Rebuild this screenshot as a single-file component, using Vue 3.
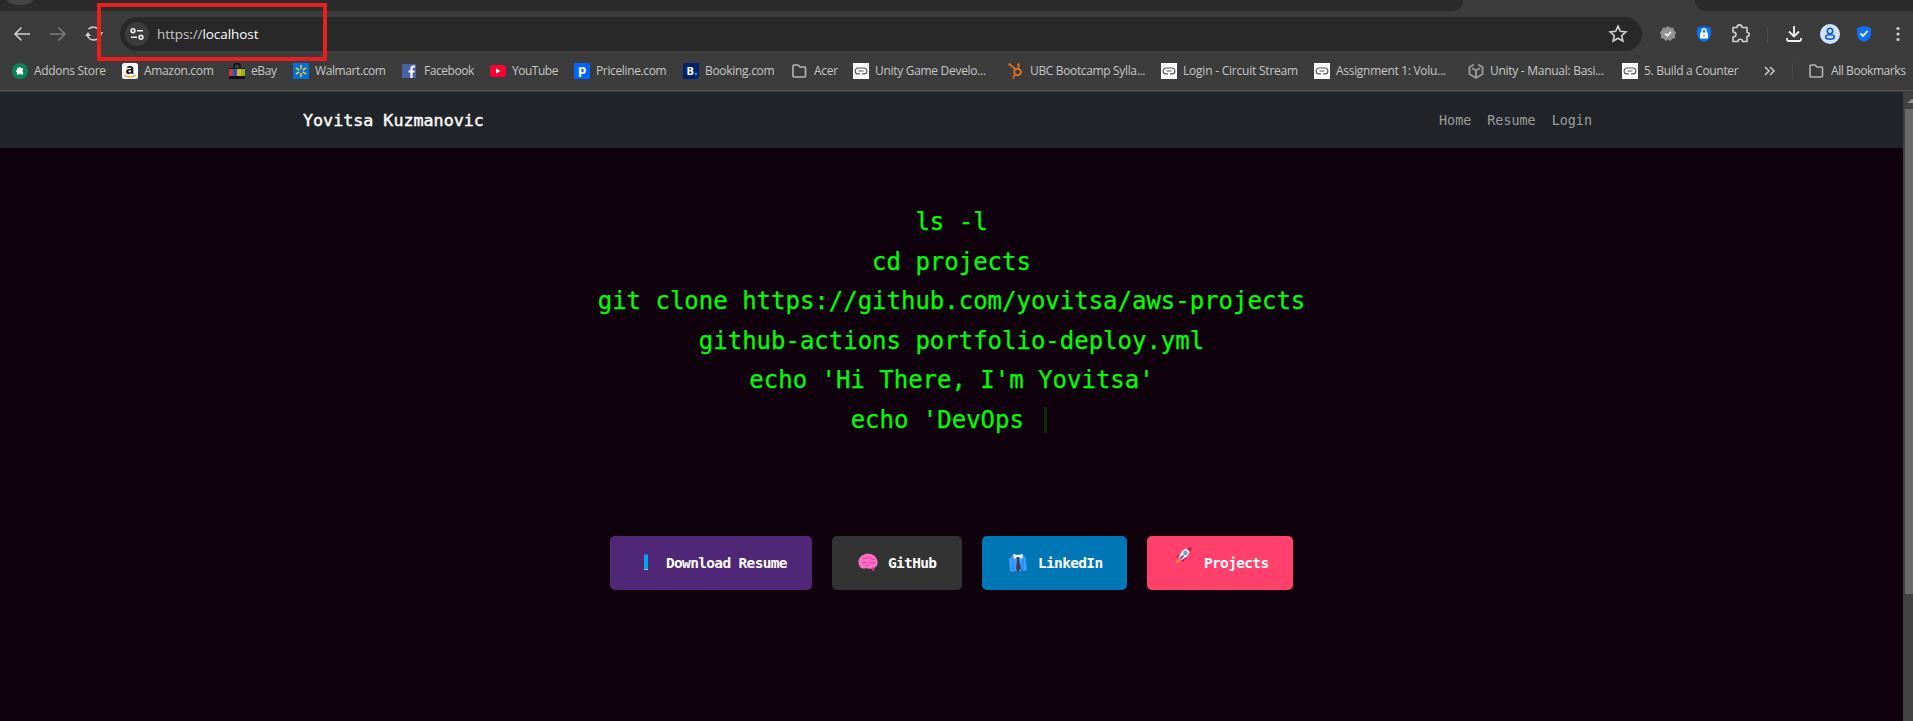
<script setup>
const bookmarks = [
  { icon: 'addons', label: 'Addons Store', ls: -0.3 },
  { icon: 'amazon', label: 'Amazon.com', ls: -0.34 },
  { icon: 'ebay', label: 'eBay', ls: -0.4 },
  { icon: 'walmart', label: 'Walmart.com', ls: -0.4 },
  { icon: 'facebook', label: 'Facebook', ls: -0.45 },
  { icon: 'youtube', label: 'YouTube', ls: -0.48 },
  { icon: 'priceline', label: 'Priceline.com', ls: -0.36 },
  { icon: 'booking', label: 'Booking.com', ls: -0.3 },
  { icon: 'folder', label: 'Acer', ls: -0.3 },
  { icon: 'link', label: 'Unity Game Develo...', ls: -0.3 },
  { icon: 'hubspot', label: 'UBC Bootcamp Sylla...', ls: -0.35 },
  { icon: 'link', label: 'Login - Circuit Stream', ls: -0.22 },
  { icon: 'link', label: 'Assignment 1: Volu...', ls: -0.3 },
  { icon: 'unity', label: 'Unity - Manual: Basi...', ls: -0.28 },
  { icon: 'link', label: '5. Build a Counter', ls: -0.31 },
]
const lines = [
  'ls -l',
  'cd projects',
  'git clone https://github.com/yovitsa/aws-projects',
  'github-actions portfolio-deploy.yml',
  "echo 'Hi There, I'm Yovitsa'",
]
</script>

<template>
  <div class="window">
    <div class="tabs"><span class="tab-search"></span><span class="active-tab"></span><span class="tab-rest"></span></div>
    <div class="toolbar">
      <svg class="tools-left" width="120" height="35" viewBox="0 0 120 35" fill="none" stroke="#d0d0d0" stroke-width="1.6">
        <path d="M30 17H15M21.500 10.500l-6.500 6.500 6.500 6.500" />
        <path d="M50 17h15M58.500 10.500l6.500 6.500-6.500 6.500" stroke="#7c7c7c" />
        <path d="M88.500 12a7 7 0 0 1 11 2M99.500 20a7 7 0 0 1-12-1" />
        <path d="M85 19l3-4 3 4zM98 15h5l-2 4z" fill="#d0d0d0" stroke="none" />
      </svg>
      <div class="omnibox">
        <span class="site-info">
          <svg width="16" height="16" viewBox="0 0 16 16" fill="none" stroke="#eee" stroke-width="1.6">
            <circle cx="4" cy="4.700" r="1.9" /><path d="M8 4.700h6M2 11.300h6" /><circle cx="12" cy="11.300" r="1.9" />
          </svg>
        </span>
        <span class="url">https://<b>localhost</b></span>
        <svg class="star" width="20" height="20" viewBox="0 0 20 20" fill="none" stroke="#d0d0d0" stroke-width="1.6">
          <path d="M10 2.2l2.3 5.1 5.6.6-4.2 3.8 1.2 5.5-4.9-2.9-4.9 2.9 1.2-5.5-4.2-3.8 5.6-.6z" />
        </svg>
      </div>
      <svg class="tools-right" width="271" height="35" viewBox="0 0 271 35" fill="none">
        <path d="M26 9l2.300 1.800 3-.3.800 2.900 2.100 2-1.300 2.600.3 3-2.900.8-2 2.100-2.300-1.300-2.300 1.300-2-2.100-2.900-.8.300-3-1.300-2.600 2.100-2 .8-2.900 3 .3z" fill="#929292" />
        <path d="M23 16.500l2.300 2.200 3.700-4" stroke="#fff" stroke-width="1.4" />
        <path d="M62 9l7 2v6q0 5-7 8-7-3-7-8v-6z" fill="#0b72f5" />
        <path d="M60 16v-2a2 2 0 0 1 4 0v2" stroke="#fff" stroke-width="1.5" /><rect x="58" y="15.500" width="8" height="6" rx="1" fill="#fff" /><path d="M62 17.500v2" stroke="#0b72f5" />
        <path d="M91 11h4c0-3.500 5-3.500 5 0h5v5c3 0 3 4 0 4v5h-4.500c0-3-4.500-3-4.500 0h-5v-4.500c4 0 4-5 0-5z" transform="translate(0 -.5)" stroke="#d0d0d0" stroke-width="1.6" stroke-linejoin="round" />
        <path d="M125.500 9v16" stroke="#484848" />
        <path d="M152 9v10M147 14.500l5 5 5-5M145 21v1.500q0 1.500 1.500 1.500h11q1.500 0 1.500-1.500V21" stroke="#f1f1f1" stroke-width="1.800" />
        <circle cx="188" cy="17" r="10" fill="#d3e3fd" /><circle cx="188" cy="14" r="2.700" stroke="#0b57d0" stroke-width="1.600" /><ellipse cx="188" cy="20" rx="4.300" ry="2.200" stroke="#0b57d0" stroke-width="1.600" />
        <path d="M222 9l7 2v6q0 5-7 8-7-3-7-8v-6z" fill="#0b72f5" /><path d="M218.500 16.500l2.500 2.500 4.500-5" stroke="#fff" stroke-width="1.8" />
        <g fill="#d0d0d0"><circle cx="256" cy="11.500" r="1.600" /><circle cx="256" cy="17" r="1.600" /><circle cx="256" cy="22.500" r="1.600" /></g>
      </svg>
    </div>
    <div class="bookmarks">
      <div v-for="b in bookmarks" :key="b.label" class="bookmark">
        <svg width="16" height="16" viewBox="0 0 16 16">
          <g v-if="b.icon === 'addons'"><circle cx="8" cy="8" r="8" fill="#0b8457" /><path d="M5 5h1.500q1-2 2.500 0h2v2q-1.500 1 0 2v2.500H9q-1-1.500-2 0H5V9.500q-2-1 0-2.500z" fill="#fff" /></g>
          <g v-else-if="b.icon === 'amazon'"><rect width="16" height="16" rx="2.500" fill="#fff" /><text x="8" y="10.500" text-anchor="middle" class="mark" font-size="14.5" fill="#111">a</text><path d="M2 12q6 4 12 0" stroke="#f7981d" stroke-width="1.300" fill="none" /></g>
          <g v-else-if="b.icon === 'ebay'"><path d="M5 5V3q0-2.500 3-2.500T11 3v2" stroke="#111" stroke-width="1.500" fill="none" /><path d="M0 5h16v11H0z" fill="#111" /><path d="M0 6h4v7H0z" fill="#e53238" /><path d="M4 6h4v7H4z" fill="#0064d2" /><path d="M8 6h4v7H8z" fill="#f5af02" /><path d="M12 6h4v7h-4z" fill="#86b817" /></g>
          <g v-else-if="b.icon === 'walmart'"><path d="M0 0h16v16H0z" fill="#0071dc" /><path d="M8 2v4M8 10v4M2.800 5l3.500 2M9.700 9l3.500 2M13.200 5L9.700 7M6.300 9l-3.500 2" stroke="#ffc220" stroke-width="1.500" /></g>
          <g v-else-if="b.icon === 'facebook'"><path d="M0 1h14v14H0z" fill="#4862a5" /><path d="M9.500 15V5.500q0-2 2-2H13M6.500 8.500h6" stroke="#fff" stroke-width="2.200" fill="none" /></g>
          <g v-else-if="b.icon === 'youtube'"><rect y="2" width="16" height="12" rx="3" fill="#f03" /><path d="M6 5.500l4.500 2.500L6 10.500z" fill="#fff" /></g>
          <g v-else-if="b.icon === 'priceline'"><rect width="16" height="16" rx="1" fill="#06f" /><text x="8" y="11" text-anchor="middle" class="mark" font-size="13" fill="#fff">p</text></g>
          <g v-else-if="b.icon === 'booking'"><path d="M0 3q0-3 3-3h13v13q0 3-3 3H0z" fill="#00216b" /><text x="3.500" y="12" class="mark" font-size="11" fill="#fff">B</text><circle cx="12.800" cy="11" r="1.200" fill="#00a8ff" /></g>
          <path v-else-if="b.icon === 'folder'" d="M1 3q0-1 1-1h4l2 2h4.500q1 0 1 1v8q0 1-1 1H2q-1 0-1-1z" fill="none" stroke="#b5b5b5" stroke-width="1.600" />
          <g v-else-if="b.icon === 'link'"><path d="M0 0h16v16H0z" fill="#fff" /><path d="M7 10.800H5a2.900 2.900 0 0 1 0-5.800h6a2.900 2.900 0 0 1 0 5.800H9M5.500 8h5" fill="none" stroke="#555" stroke-width="1.200" /></g>
          <g v-else-if="b.icon === 'hubspot'" fill="none" stroke="#d9721d"><circle cx="9.500" cy="9" r="3.300" stroke-width="2" /><path d="M2 1.500l5.500 5M10.500 5V1M7 11.500L5 14.500" stroke-width="1.700" /><path d="M.500 1.500h2.500M9.500 1.500h2M5 15h1" stroke-width="2.600" /></g>
          <g v-else fill="none" stroke="#969696" stroke-width="2"><path d="M6 1.500L1.500 4v7L8 15l6.500-4V4L10 1.500M4 5l4 2.500L12 5M8 7.500V15" /></g>
        </svg>
        <span :style="{ letterSpacing: b.ls + 'px' }">{{ b.label }}</span>
      </div>
      <svg width="32" height="16" viewBox="0 0 32 16" fill="none"><path d="M1 4l4 4-4 4M6 4l4 4-4 4" stroke="#c7c7c7" stroke-width="1.600" /><path d="M28.500 0v16" stroke="#484848" /></svg>
      <div class="bookmark all">
        <svg width="16" height="16" viewBox="0 0 16 16"><path d="M1 3q0-1 1-1h4l2 2h4.500q1 0 1 1v8q0 1-1 1H2q-1 0-1-1z" fill="none" stroke="#b5b5b5" stroke-width="1.600" /></svg>
        <span>All Bookmarks</span>
      </div>
    </div>
    <div class="viewport">
      <div class="page">
        <nav class="nav">
          <span class="brand">Yovitsa Kuzmanovic</span>
          <div class="links"><a>Home</a><a>Resume</a><a>Login</a></div>
        </nav>
        <div class="terminal">
          <div v-for="l in lines" :key="l">{{ l }}</div>
          <div class="typing">echo 'DevOps <i class="cursor"></i></div>
        </div>
        <div class="actions">
          <a class="btn resume"><svg width="22" height="20" viewBox="0 0 22 20"><path d="M8 1.500h4v15H8z" fill="#00a6ed" /><path d="M8 16.500h4" stroke="#9fc7dd" /></svg><span>Download Resume</span></a>
          <a class="btn github"><svg width="20" height="20" viewBox="0 0 20 20"><path d="M.5 10C0 6 3 2 7.500 1c6-1.500 11 2 12 7 .5 4-1 6-3 6.500l-.5 4-3-3c-2 1-4-1-6 0-4 .5-6-2-6.500-5.500z" fill="#ff6fc4" /><path d="M5 5l3 1 2-2M12 5l3 2 2-1M4 10l3-1 2 1M11 10l3-1 3 1M8 13l3-1" fill="none" stroke="#f0349f" stroke-width="1" /><path d="M13.500 15l2.500 3.500v-4z" fill="#e21c75" /></svg><span>GitHub</span></a>
          <a class="btn linkedin"><svg width="18" height="20" viewBox="0 0 18 20"><path d="M4 2h10l2.500 2L18 17l-4 1-1-3-1 3H5l-1 1-3-1L0 6z" fill="#3c9cff" /><path d="M4 6v11M14 6v11" stroke="#2f7fda" /><path d="M4 1l5 1 5-1-1 5-4-2-4 2z" fill="#f3f2f5" /><path d="M7.500 4h3L10 7l2 8-2 3H8l-1-3 1-8z" fill="#3f3c62" /></svg><span>LinkedIn</span></a>
          <a class="btn projects"><svg width="18" height="20" viewBox="0 0 18 20"><path d="M1 11l5-4 2 2-3 4zM8 16l4-5-2-1-4 4z" fill="#c6134f" /><path d="M3.500 12C5 6 9 2 15.500 1.500c0 6-4 10-9.500 13z" fill="#f2edf3" /><path d="M11.500 2.500Q14 .8 16.500 1q.2 2.500-1.300 5z" fill="#d2164e" /><circle cx="10.500" cy="7" r="2.200" fill="#5fa9cf" /><path d="M2 12.500l3.500 3L.5 17z" fill="#ff8c35" /><path d="M5 13l3.500-3.500" stroke="#b8124b" stroke-width="1.600" /></svg><span>Projects</span></a>
        </div>
      </div>
      <div class="scrollbar"><span class="arrow"></span><span class="thumb"></span></div>
    </div>
    <div class="highlight"></div>
  </div>
</template>

<style>
body { overflow: hidden; background: #10020c; }
</style>
<style scoped>
.window { position: relative; display: flex; flex-direction: column; height: 721px; background: #3c3c3c; font-family: "Open Sans", "Noto Sans", sans-serif; }
.tabs { display: flex; justify-content: space-between; height: 11px; background: #3c3c3c; }
.tab-search { width: 1463px; background: radial-gradient(ellipse 13px 5px at 20px 0, #444 96%, #2b2b2b 100%); border-radius: 0 0 10px 0; }
.active-tab { flex: 1; }
.tab-rest { width: 218px; background: #2b2b2b; border-radius: 0 0 0 12px; }
.toolbar { display: flex; align-items: center; height: 46px; }
.tools-left { flex: none; }
.omnibox { display: flex; align-items: center; flex: none; width: 1522px; height: 34px; border-radius: 17px; background: #282828; color: #c7c7c7; }
.site-info { display: grid; place-items: center; width: 24px; height: 24px; margin-left: 5px; border-radius: 50%; background: #3c3c3c; }
.url { margin-left: 8px; font-size: 13.5px; letter-spacing: -0.07px; }
.url b { color: #fff; font-weight: 400; }
.star { margin-left: auto; margin-right: 14px; }
.bookmarks { display: grid; grid-template-columns: 110px 107px 64px 109px 88px 84px 109px 109px 61px 155px 153px 153px 154px 154px 142px 45px 104px; align-items: center; height: 34px; box-sizing: border-box; padding: 0 0 5px 12px; border-bottom: 1px solid #555; margin-bottom: 1px; color: #c7c7c7; font-size: 12px; line-height: 16px; }
.bookmark { display: flex; align-items: center; gap: 6px; white-space: nowrap; }
.bookmark svg { flex: none; }
.all span { letter-spacing: -0.42px; }
.mark { font-family: "Open Sans", sans-serif; font-weight: 700; }
.viewport { display: flex; flex: 1; min-height: 0; }
.page { flex: 1; background: #10020c; font-family: "DejaVu Sans Mono", monospace; }
.nav { display: flex; align-items: center; justify-content: space-between; height: 56px; padding: 0 311px 0 303px; background: #212529; }
.brand { color: #fff; font-size: 16.7px; -webkit-text-stroke: 0.4px #fff; }
.links { display: flex; gap: 16px; color: #9b9d9e; font-size: 13.4px; }
.terminal { padding-top: 55px; color: #0f0; font-size: 24px; letter-spacing: -0.01px; line-height: 39.5px; text-align: center; white-space: pre; -webkit-text-stroke: 0.25px #0f0; }
.typing { height: 39px; }
.cursor { display: inline-block; width: 3px; height: 26px; margin: 0 5px 0 6px; vertical-align: -5px; background: #0d2c0b; }
.actions { display: flex; justify-content: center; gap: 20px; margin-top: 96px; }
.btn { display: flex; align-items: center; height: 54px; box-sizing: border-box; border-radius: 5px; color: #fff; font-size: 14.5px; font-weight: 700; letter-spacing: -0.67px; white-space: nowrap; }
.resume { width: 202px; padding-left: 26px; gap: 8px; background: #4f2776; }
.github { width: 130px; padding-left: 26px; gap: 10px; background: #333; }
.linkedin { width: 145px; padding-left: 27px; gap: 11px; background: #0077b5; }
.projects { width: 146px; padding-left: 28px; gap: 11px; background: #ff416c; }
.projects svg { margin-bottom: 14px; }
.scrollbar { display: flex; flex-direction: column; align-items: flex-end; width: 10px; background: #424242; overflow: hidden; }
.arrow { height: 4px; width: 0; margin: 7px -4px 6px 0; border: solid transparent; border-width: 0 5px 4px; border-bottom-color: #929292; box-sizing: border-box; }
.thumb { width: 8px; height: 485px; background: #6b6b6b; }
.highlight { position: absolute; left: 97px; top: 3px; width: 230px; height: 58px; box-sizing: border-box; border: 4px solid #e81f1f; }
</style>
